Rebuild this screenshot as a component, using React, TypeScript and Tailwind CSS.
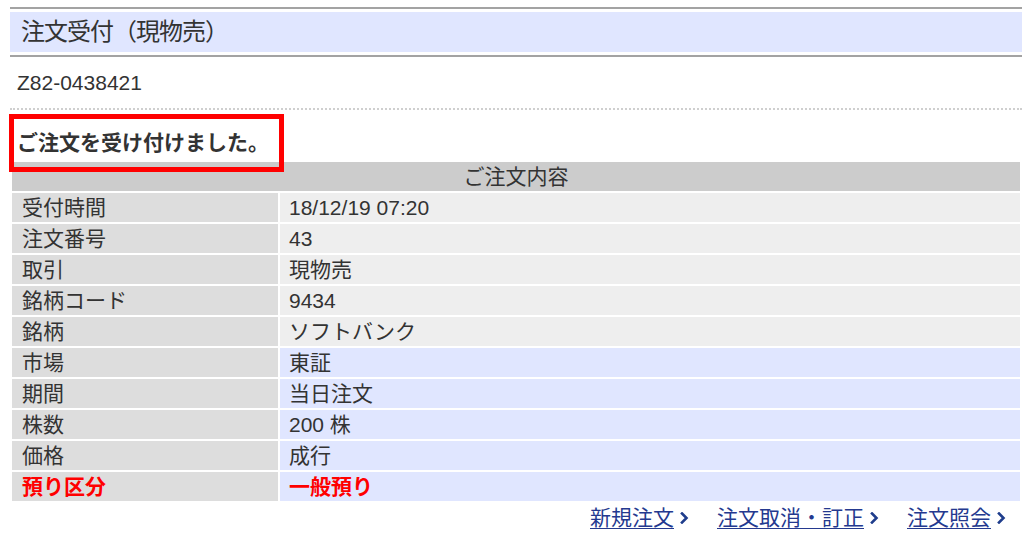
import React from 'react';

type Row = { label: string; value: string; tone: 'gray' | 'blue'; alert?: boolean };

const rows: Row[] = [
  { label: '受付時間', value: '18/12/19 07:20', tone: 'gray' },
  { label: '注文番号', value: '43', tone: 'gray' },
  { label: '取引', value: '現物売', tone: 'gray' },
  { label: '銘柄コード', value: '9434', tone: 'gray' },
  { label: '銘柄', value: 'ソフトバンク', tone: 'gray' },
  { label: '市場', value: '東証', tone: 'blue' },
  { label: '期間', value: '当日注文', tone: 'blue' },
  { label: '株数', value: '200 株', tone: 'blue' },
  { label: '価格', value: '成行', tone: 'blue' },
  { label: '預り区分', value: '一般預り', tone: 'blue', alert: true }
];

function Chevron() {
  return (
    <svg width="9" height="12" viewBox="0 0 9 12" className="ml-[6px] shrink-0">
      <path d="M2 1.5 L6.5 6 L2 10.5" fill="none" stroke="#1f3d8c" strokeWidth="2.6" strokeLinecap="square" />
    </svg>
  );
}

function NavLink({ children }: { children: React.ReactNode }) {
  return (
    <a href="#" className="flex items-center text-[#24398f] underline underline-offset-[3px] decoration-1">
      <span>{children}</span>
      <Chevron />
    </a>
  );
}

export default function App() {
  return (
    <div className="relative w-[1024px] h-[545px] bg-white overflow-hidden font-['Liberation_Sans','Noto_Sans_CJK_JP',sans-serif] text-[#333333] text-[21px]">
      <div className="ml-[10px] mr-[2px] pt-[7px]">
        {/* title band */}
        <div className="border-y-2 border-[#a3a3a3] py-[3px]">
          <div className="h-[40px] bg-[#e0e6ff] flex items-center pl-[11px] text-[24px] leading-none tracking-[-1px]">
            注文受付（現物売）
          </div>
        </div>

        <div className="mt-[11px] h-[29px] leading-[29px] pl-[7px]">Z82-0438421</div>

        <div className="mt-[11px] border-t-2 border-dotted border-[#cfcfcf]" />

        <div className="mt-[18px] h-[29px] leading-[29px] pl-[7px] font-bold">ご注文を受け付けました。</div>

        <table className="mt-[3px] w-full border-separate border-spacing-[2px]">
          <thead>
            <tr>
              <th colSpan={2} className="h-[29px] bg-[#cccccc] font-normal text-center leading-none p-0">
                ご注文内容
              </th>
            </tr>
          </thead>
          <tbody>
            {rows.map((r) => (
              <tr key={r.label}>
                <td
                  className={`w-[266px] h-[29px] p-0 pl-[10px] bg-[#dddddd] leading-none ${r.alert ? 'text-[#ff0000] font-bold' : ''}`}>
                  {r.label}
                </td>
                <td
                  className={`h-[29px] p-0 pl-[9px] leading-none ${r.tone === 'gray' ? 'bg-[#eeeeee]' : 'bg-[#e0e6ff]'} ${r.alert ? 'text-[#ff0000] font-bold' : ''}`}>
                  {r.value}
                </td>
              </tr>
            ))}
          </tbody>
        </table>

        <div className="h-[29px] flex items-center justify-end gap-[28px] pr-[16px]">
          <NavLink>新規注文</NavLink>
          <NavLink>注文取消・訂正</NavLink>
          <NavLink>注文照会</NavLink>
        </div>
      </div>

      {/* red highlight frame */}
      <div className="absolute left-[9px] top-[114px] w-[275px] h-[58px] border-[5px] border-[#ff0000]" />
    </div>
  );
}
